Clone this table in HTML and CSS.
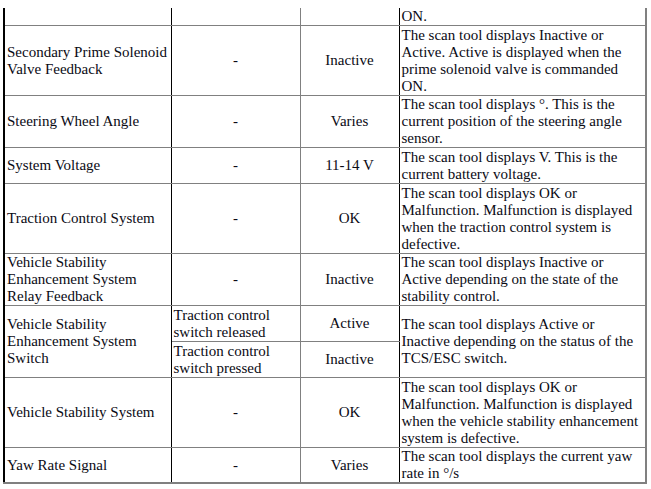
FILE: index.html
```html
<!DOCTYPE html>
<html>
<head>
<meta charset="utf-8">
<link rel="stylesheet" href="styles.css">
</head>
<body>
<table class="data">
  <colgroup>
    <col class="c1"><col class="c2"><col class="c3"><col class="c4">
  </colgroup>
  <tr class="r18 first">
    <td class="name"></td><td class="cond"></td><td class="val"></td><td class="desc">ON.</td>
  </tr>
  <tr class="r70">
    <td class="name">Secondary Prime Solenoid Valve Feedback</td><td class="cond">-</td><td class="val">Inactive</td>
    <td class="desc">The scan tool displays Inactive or Active. Active is displayed when the prime solenoid valve is commanded ON.</td>
  </tr>
  <tr class="r52">
    <td class="name">Steering Wheel Angle</td><td class="cond">-</td><td class="val">Varies</td>
    <td class="desc">The scan tool displays °. This is the current position of the steering angle sensor.</td>
  </tr>
  <tr class="r36">
    <td class="name">System Voltage</td><td class="cond">-</td><td class="val">11-14 V</td>
    <td class="desc">The scan tool displays V. This is the current battery voltage.</td>
  </tr>
  <tr class="r70">
    <td class="name">Traction Control System</td><td class="cond">-</td><td class="val">OK</td>
    <td class="desc">The scan tool displays OK or Malfunction. Malfunction is displayed when the traction control system is defective.</td>
  </tr>
  <tr class="r52">
    <td class="name">Vehicle Stability Enhancement System Relay Feedback</td><td class="cond">-</td><td class="val">Inactive</td>
    <td class="desc">The scan tool displays Inactive or Active depending on the state of the stability control.</td>
  </tr>
  <tr class="r36">
    <td class="name" rowspan="2">Vehicle Stability Enhancement System Switch</td><td class="cond left">Traction control switch released</td><td class="val">Active</td>
    <td class="desc" rowspan="2">The scan tool displays Active or Inactive depending on the status of the TCS/ESC switch.</td>
  </tr>
  <tr class="r36">
    <td class="cond left">Traction control switch pressed</td><td class="val">Inactive</td>
  </tr>
  <tr class="r70">
    <td class="name">Vehicle Stability System</td><td class="cond">-</td><td class="val">OK</td>
    <td class="desc">The scan tool displays OK or Malfunction. Malfunction is displayed when the vehicle stability enhancement system is defective.</td>
  </tr>
  <tr class="r35 last">
    <td class="name">Yaw Rate Signal</td><td class="cond">-</td><td class="val">Varies</td>
    <td class="desc">The scan tool displays the current yaw rate in °/s</td>
  </tr>
</table>
</body>
</html>
```

FILE: styles.css
```css
html, body {
  margin: 0;
  padding: 0;
  background: #ffffff;
}

.data {
  margin: 8px 0 0 3px;
  border-collapse: collapse;
  table-layout: fixed;
  width: 642px;
  font-family: "Liberation Serif", "Times New Roman", serif;
  font-size: 15px;
  line-height: 17px;
  color: #0a0a14;
}

.c1 { width: 167px; }
.c2 { width: 129px; }
.c3 { width: 99px; }
.c4 { width: 247px; }

.data td {
  padding: 0 2px;
  vertical-align: middle;
  border-top: 1px solid #808080;
  border-bottom: 1px solid #808080;
}

.data tr.first td {
  border-top: none;
}

.data tr.last td {
  border-bottom: 2px solid #808080;
}

.name {
  border-left: 2px solid #000;
  border-right: 1px solid #000;
}

.cond {
  text-align: center;
  border-right: 1px solid #808080;
}

.cond.left {
  text-align: left;
}

.val {
  text-align: center;
  border-right: 1px solid #000;
}

.desc {
  border-right: 2px solid #808080;
}

.r18 td { height: 17px; }
.r70 td { height: 69px; }
.r52 td { height: 51px; }
.r36 td { height: 35px; }
.r35 td { height: 34px; }
```
